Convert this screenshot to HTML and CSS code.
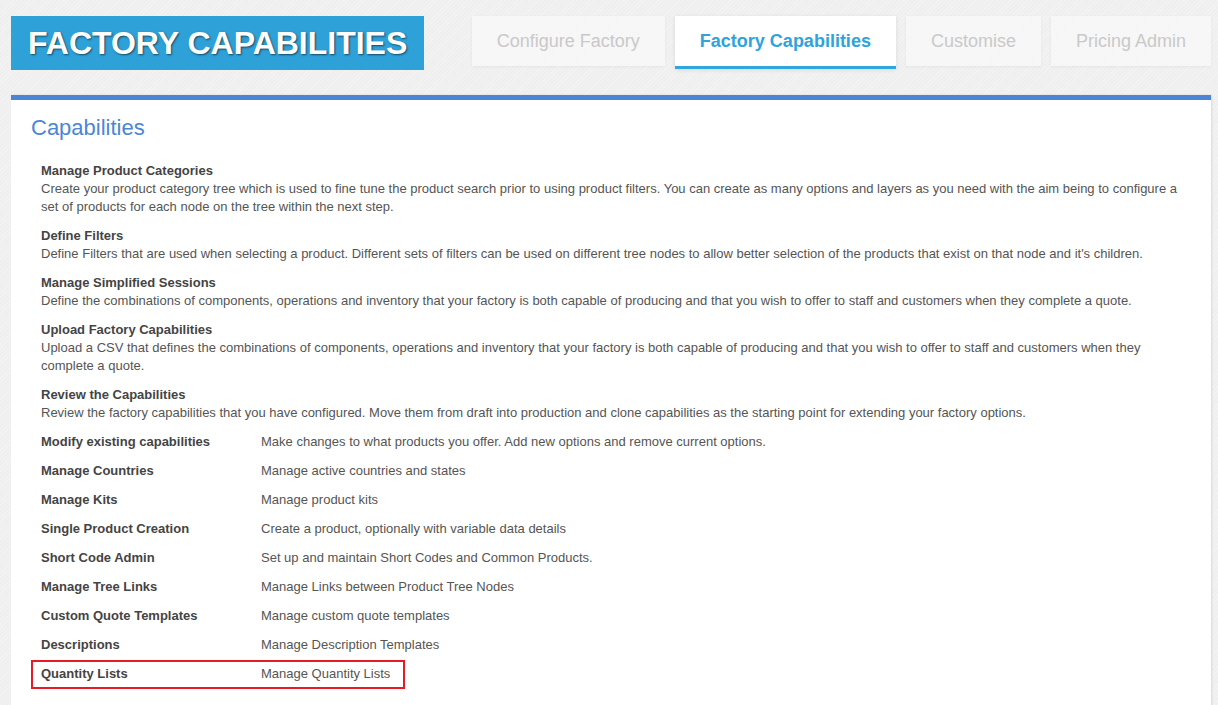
FILE: index.html
```html
<!DOCTYPE html>
<html lang="en">
  <head>
    <meta charset="UTF-8" />
    <meta name="viewport" content="width=device-width, initial-scale=1.0" />
    <title>Factory Capabilities</title>

    <link rel="stylesheet" href="styles.css">
  </head>

  <body>
    <header class="top">
      <h1 class="brand">FACTORY CAPABILITIES</h1>
      <nav class="tabs">
        <a class="tab">Configure Factory</a>
        <a class="tab active">Factory Capabilities</a>
        <a class="tab">Customise</a>
        <a class="tab">Pricing Admin</a>
      </nav>
    </header>

    <section class="panel">
      <h2>Capabilities</h2>

      <div class="block">
        <b>Manage Product Categories</b>
        <p>Create your product category tree which is used to fine tune the product search prior to using product filters. You can create as many options and layers as you need with the aim being to configure a set of products for each node on the tree within the next step.</p>
      </div>
      <div class="block">
        <b>Define Filters</b>
        <p>Define Filters that are used when selecting a product. Different sets of filters can be used on different tree nodes to allow better selection of the products that exist on that node and it's children.</p>
      </div>
      <div class="block">
        <b>Manage Simplified Sessions</b>
        <p>Define the combinations of components, operations and inventory that your factory is both capable of producing and that you wish to offer to staff and customers when they complete a quote.</p>
      </div>
      <div class="block">
        <b>Upload Factory Capabilities</b>
        <p>Upload a CSV that defines the combinations of components, operations and inventory that your factory is both capable of producing and that you wish to offer to staff and customers when they complete a quote.</p>
      </div>
      <div class="block">
        <b>Review the Capabilities</b>
        <p>Review the factory capabilities that you have configured. Move them from draft into production and clone capabilities as the starting point for extending your factory options.</p>
      </div>

      <div class="row"><b>Modify existing capabilities</b><span>Make changes to what products you offer. Add new options and remove current options.</span></div>
      <div class="row"><b>Manage Countries</b><span>Manage active countries and states</span></div>
      <div class="row"><b>Manage Kits</b><span>Manage product kits</span></div>
      <div class="row"><b>Single Product Creation</b><span>Create a product, optionally with variable data details</span></div>
      <div class="row"><b>Short Code Admin</b><span>Set up and maintain Short Codes and Common Products.</span></div>
      <div class="row"><b>Manage Tree Links</b><span>Manage Links between Product Tree Nodes</span></div>
      <div class="row"><b>Custom Quote Templates</b><span>Manage custom quote templates</span></div>
      <div class="row"><b>Descriptions</b><span>Manage Description Templates</span></div>
      <div class="row marked"><b>Quantity Lists</b><span>Manage Quantity Lists</span></div>
    </section>
  </body>
</html>
```

FILE: styles.css
```css
body {
  margin: 0;
  padding: 16px 7px 0 11px;
  font-family: "Liberation Sans", Arial, sans-serif;
  background: #efefef repeating-linear-gradient(135deg, rgba(255, 255, 255, 0.25) 0 1px, transparent 1px 3px);
}

.top {
  display: flex;
  justify-content: space-between;
  align-items: flex-start;
  height: 79px;
}

.brand {
  margin: 0;
  height: 54px;
  padding: 0 17px;
  background: #2ea1d9;
  color: #fff;
  font-size: 32px;
  line-height: 54px;
  font-weight: bold;
  text-shadow: 1px 1px 2px rgba(0, 0, 0, 0.55);
}

.tabs {
  display: flex;
  gap: 10px;
}

.tab {
  height: 50px;
  padding: 0 25px;
  font-size: 18px;
  line-height: 50px;
  color: #c9c9c9;
  background: rgba(255, 255, 255, 0.45);
  box-shadow: 0 1px 3px rgba(0, 0, 0, 0.05);
}

.tab.active {
  background: #fff;
  color: #2ea3dd;
  font-weight: bold;
  border-bottom: 3px solid #2ea6e0;
  box-shadow: 0 1px 4px rgba(0, 0, 0, 0.1);
}

.panel {
  background: #fff;
  border-top: 5px solid #4b86d6;
  box-shadow: 1px 0 2px rgba(0, 0, 0, 0.1);
  padding: 15px 20px 20px;
  min-height: 600px;
  font-size: 13px;
  line-height: 18px;
  color: #555;
}

.panel h2 {
  margin: 0 0 16px;
  font-size: 22px;
  line-height: 26px;
  font-weight: normal;
  color: #4b86d6;
}

.panel b {
  color: #444;
}

.block {
  padding: 5px 10px 6px;
}

.block b {
  display: block;
}

.block p {
  margin: 0;
}

.row {
  display: grid;
  grid-template-columns: 220px 1fr;
  padding: 5px 10px 6px;
}

.row.marked {
  width: 374px;
  box-sizing: border-box;
  outline: 2px solid #e61b24;
  outline-offset: -2px;
}
```
